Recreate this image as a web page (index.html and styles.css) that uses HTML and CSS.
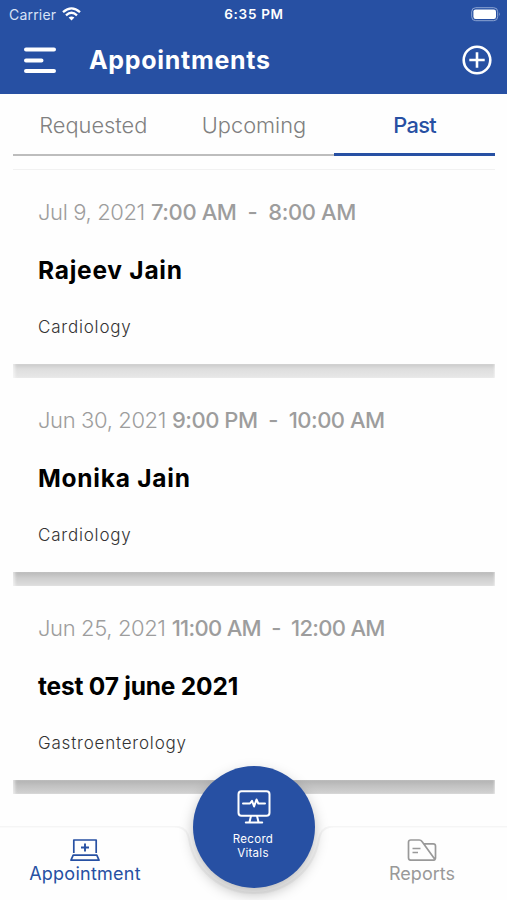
FILE: index.html
```
<!DOCTYPE html>
<html lang="en">
<head>
    <meta charset="utf-8">
    <title>Appointments</title>
    <link rel="stylesheet" href="styles.css">
</head>
<body>
<div class="app">
    <div class="status">
        <div class="status-carrier">
            <span class="carrier">Carrier</span>
            <svg width="19" height="14" viewBox="0 0 19 14" fill="none" stroke="#fff" stroke-width="2.3">
                <path d="M1 5.2Q9.5 -2.5 18 5.2"/>
                <path d="M4 8.3Q9.5 3.3 15 8.3"/>
                <path d="M6.6 10.6Q9.5 8.2 12.4 10.6L9.5 13.5Z" fill="#fff" stroke="none"/>
            </svg>
        </div>
        <span class="clock">6:35 PM</span>
        <svg class="battery" width="30" height="15" viewBox="0 0 30 15">
            <rect x="0.7" y="0.7" width="26" height="13" rx="4" fill="none" stroke="#8da4d2" stroke-width="1"/>
            <rect x="2.4" y="2.4" width="22.6" height="9.6" rx="2.2" fill="#fff"/>
            <path d="M28 5.2Q29.8 7.2 28 9.2Z" fill="#8da4d2"/>
        </svg>
    </div>
    <header class="header">
        <svg width="32" height="27" viewBox="0 0 32 27" stroke="#fff" stroke-width="4" stroke-linecap="round">
            <path d="M2 2.6H30M2 13.4H17.5M2 24.1H30"/>
        </svg>
        <h1 class="title">Appointments</h1>
        <svg class="add" width="30" height="30" viewBox="0 0 30 30" fill="none" stroke="#fff" stroke-width="2.6">
            <circle cx="15" cy="15" r="13.3"/>
            <path d="M15 7.3V22.7M7.3 15H22.7"/>
        </svg>
    </header>
    <nav class="tabs">
        <span class="tab">Requested</span>
        <span class="tab">Upcoming</span>
        <span class="tab active">Past</span>
    </nav>
    <main class="list">
        <section class="card">
            <p class="when"><span class="date">Jul 9, 2021</span><span class="time">7:00 AM&nbsp; -&nbsp; 8:00 AM</span></p>
            <h2 class="name">Rajeev Jain</h2>
            <p class="dept">Cardiology</p>
        </section>
        <div class="gap gap-light"></div>
        <section class="card">
            <p class="when"><span class="date">Jun 30, 2021</span><span class="time time-mid">9:00 PM&nbsp; -&nbsp; 10:00 AM</span></p>
            <h2 class="name">Monika Jain</h2>
            <p class="dept">Cardiology</p>
        </section>
        <div class="gap gap-mid"></div>
        <section class="card">
            <p class="when"><span class="date">Jun 25, 2021</span><span class="time time-tight">11:00 AM&nbsp; -&nbsp; 12:00 AM</span></p>
            <h2 class="name name-long">test 07 june 2021</h2>
            <p class="dept">Gastroenterology</p>
        </section>
        <div class="gap gap-dark"></div>
    </main>
    <footer class="bottom">
        <svg class="bar" width="507" height="74" viewBox="0 0 507 74">
            <path d="M-3 .5H174Q187 .5 189 13C194 44 221 67 254 67S314 44 319 13Q321 .5 334 .5H510V78H-3Z" fill="#fefefe" stroke="#f5f5f5" stroke-width="2"/>
        </svg>
        <div class="item item-active">
            <svg width="30" height="22" viewBox="0 0 30 22" fill="none" stroke="#2750a3" stroke-width="1.7">
                <path d="M3.8 14V1H26.2V14M3.2 16.2H26.8L29 21.2H1Z" stroke-linejoin="round"/>
                <path d="M15 4.5V12.5M11 8.5H19" stroke-width="1.9"/>
            </svg>
            <span class="label">Appointment</span>
        </div>
        <div class="item item-reports">
            <svg width="30" height="22" viewBox="0 0 30 22" fill="none" stroke="#999" stroke-width="1.7" stroke-linejoin="round">
                <path d="M28 20.5Q27.5 21.2 26 21.2H4Q1.5 21.2 1.5 18.8V3.2Q1.5 1 3.8 1H12.2Q14 1 15 2.5L28 20.5Q28.5 20 28.5 18.8V7Q28.5 4.8 26.2 4.8H16.7"/>
                <path d="M5.5 9.5H13.5M5.5 13.5H11"/>
            </svg>
            <span class="label">Reports</span>
        </div>
        <div class="record">
            <svg width="34" height="34" viewBox="0 0 34 34" fill="none" stroke="#fff" stroke-width="2" stroke-linejoin="round" stroke-linecap="round">
                <rect x="1.5" y="1.2" width="31" height="24.6" rx="3"/>
                <path d="M6 13.5H13L15 10.8L17.1 16.5L19.5 9.5L21.3 13.5H28"/>
                <path d="M14 26L12.5 32M20 26L21.5 32M8.8 32.4H25.2"/>
            </svg>
            <span class="record-text">Record<br>Vitals</span>
        </div>
    </footer>
</div>
</body>
</html>
```
FILE: styles.css
```
body {
    margin: 0;
    font-family: Inter, "Liberation Sans", sans-serif;
    background: #fefefe;
}

h1, h2, p {
    margin: 0;
}

.app {
    width: 507px;
    height: 900px;
    display: flex;
    flex-direction: column;
    position: relative;
    overflow: hidden;
}

.status {
    height: 28px;
    box-sizing: border-box;
    padding: 0 6px 0 9px;
    display: grid;
    grid-template-columns: 1fr auto 1fr;
    align-items: center;
    background: #2750a3;
    color: #fff;
    font-size: 13.5px;
}

.status-carrier {
    display: flex;
    align-items: center;
    gap: 6px;
}

.carrier {
    color: #d8e2f6;
    font-size: 14px;
    letter-spacing: 0.2px;
}

.clock {
    margin-right: 2px;
    font-weight: 600;
    letter-spacing: 0.7px;
}

.battery {
    justify-self: end;
}

.header {
    height: 66px;
    box-sizing: border-box;
    padding: 0 15px 2px 24px;
    display: flex;
    align-items: center;
    background: #2750a3;
    color: #fff;
}

.title {
    margin-left: 33px;
    font-size: 25px;
    font-weight: 700;
    letter-spacing: 0.7px;
}

.add {
    margin-left: auto;
}

.tabs {
    height: 62px;
    margin: 0 12px 0 13px;
    display: grid;
    grid-template-columns: 1fr 1fr 1fr;
    color: #808080;
    font-size: 21.8px;
    font-weight: 300;
}

.tab {
    line-height: 62px;
    text-align: center;
    box-shadow: inset 0 -2px #bdbdbd;
}

.active {
    color: #2750a3;
    font-weight: 500;
    letter-spacing: -0.7px;
    box-shadow: inset 0 -3px #2750a3;
}

.list {
    margin: 13px 12px 0 13px;
    border-top: 1px solid #f1f1f1;
}

.card {
    height: 194px;
    box-sizing: border-box;
    padding: 27px 25px 0;
    background: #fefefe;
}

.when {
    height: 30px;
    line-height: 30px;
    display: flex;
    gap: 6px;
    color: #9d9d9d;
    font-size: 22px;
    font-weight: 300;
    white-space: nowrap;
}

.date {
    letter-spacing: -0.38px;
}

.time {
    font-weight: 500;
    letter-spacing: -0.4px;
}

.time-mid {
    letter-spacing: -0.5px;
}

.time-tight {
    letter-spacing: -0.7px;
}

.name {
    margin-top: 27px;
    font-size: 24.5px;
    line-height: 33px;
    font-weight: 700;
    letter-spacing: 0.75px;
    color: #000;
}

.name-long {
    letter-spacing: -0.2px;
}

.dept {
    margin-top: 28px;
    font-size: 17px;
    line-height: 24px;
    font-weight: 300;
    letter-spacing: 0.8px;
    color: #333;
}

/* shadow band between two cards */
.gap {
    height: 14px;
    box-shadow: inset 3px 0 3px -1px rgba(255, 255, 255, 0.6), inset -2px 0 2px -1px rgba(255, 255, 255, 0.5);
}

.gap-light {
    background: linear-gradient(#cacaca, #dedede 5px, #e8e8e8);
}

.gap-mid {
    background: linear-gradient(#b8b8b8, #cecece 6px, #dedede);
}

.gap-dark {
    background: linear-gradient(#b2b2b2, #c2c2c2 6px, #d3d3d3);
}

.bottom {
    position: absolute;
    left: 0;
    bottom: 0;
    width: 507px;
    height: 74px;
    display: flex;
    justify-content: space-between;
}

.bar {
    position: absolute;
    left: 0;
    top: 0;
}

.item {
    position: relative;
    width: 170px;
    padding-top: 13px;
    display: flex;
    flex-direction: column;
    align-items: center;
    color: #999;
    font-size: 18px;
    line-height: 26px;
}

.item-active {
    color: #2750a3;
}

.item-active .label {
    letter-spacing: 0.25px;
}

.record {
    position: absolute;
    left: 193px;
    top: -60px;
    width: 122px;
    height: 122px;
    box-sizing: border-box;
    padding-top: 24px;
    display: flex;
    flex-direction: column;
    align-items: center;
    border-radius: 50%;
    background: #2750a3;
    box-shadow: 0 6px 14px rgba(0, 0, 0, 0.26);
    color: #fff;
}

.record-text {
    margin-top: 8px;
    margin-right: 2px;
    font-size: 11.5px;
    line-height: 14px;
    text-align: center;
    letter-spacing: 0.3px;
}
```
